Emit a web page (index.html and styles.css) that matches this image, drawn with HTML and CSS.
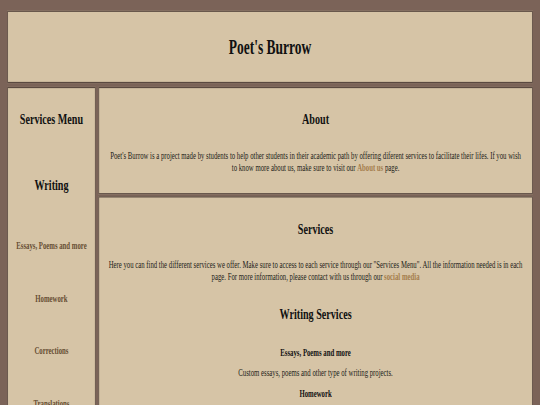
FILE: index.html
```html
<!DOCTYPE html>
<html lang="en">
<head>
<meta charset="utf-8">
<title>Poet's Burrow</title>
<link rel="stylesheet" href="styles.css">
</head>
<body>
<div class="page">
  <header class="box header">
    <h1 class="site-title">Poet's Burrow</h1>
  </header>

  <nav class="box sidebar">
    <h2 class="menu-title">Services Menu</h2>
    <h2 class="menu-group">Writing</h2>
    <ul class="menu-list">
      <li><a class="menu-link" href="#essays">Essays, Poems and more</a></li>
      <li><a class="menu-link" href="#homework">Homework</a></li>
      <li><a class="menu-link" href="#corrections">Corrections</a></li>
      <li><a class="menu-link" href="#translations">Translations</a></li>
    </ul>
  </nav>

  <main class="content">
    <section class="box section">
      <h2 class="section-title">About</h2>
      <p class="section-text">Poet's Burrow is a project made by students to help other students in their academic path by offering diferent services to facilitate their lifes. If you wish to know more about us, make sure to visit our <a class="inline-link" href="#about">About us</a> page.</p>
    </section>

    <section class="box section">
      <h2 class="section-title">Services</h2>
      <p class="section-text">Here you can find the different services we offer. Make sure to access to each service through our "Services Menu". All the information needed is in each page. For more information, please contact with us through our <a class="inline-link" href="#social">social media</a></p>

      <h2 class="section-title sub-title">Writing Services</h2>
      <div class="service-list">
        <h4 class="service-name" id="essays">Essays, Poems and more</h4>
        <p class="service-desc">Custom essays, poems and other type of writing projects.</p>
        <h4 class="service-name" id="homework">Homework</h4>
        <p class="service-desc">Help with your homework of any subject.</p>
        <h4 class="service-name" id="corrections">Corrections</h4>
        <p class="service-desc">Corrections of your texts.</p>
      </div>
    </section>
  </main>
</div>
</body>
</html>
```

FILE: styles.css
```css
html, body {
  margin: 0;
  padding: 0;
  overflow: hidden;
  background: #7b6358;
}

body {
  font-family: "Liberation Serif", "Times New Roman", serif;
  color: #1c1814;
}

/* The page is laid out at 1280px and compressed to the 540x405 window */
.page {
  width: 1280px;
  box-sizing: border-box;
  padding: 17px;
  display: grid;
  grid-template-columns: 210px 1fr;
  gap: 6px;
  transform: scale(0.421875, 0.625);
  transform-origin: 0 0;
}

.box {
  background: #d6c4a6;
  border: 2px solid #5a4940;
  box-sizing: border-box;
}

.header {
  grid-column: 1 / -1;
  padding: 17px 16px 16px;
  text-align: center;
}

.site-title {
  font-size: 32px;
  font-weight: bold;
  margin: 21px 0;
  color: #111;
}

.sidebar {
  padding: 16px;
  display: flex;
  flex-direction: column;
  align-items: center;
  text-align: center;
}

.menu-title,
.menu-group {
  font-size: 24px;
  font-weight: bold;
  margin: 0;
  color: #111;
}

.menu-title { margin-top: 20px; }
.menu-group { margin-top: 79px; }

.menu-list {
  list-style: none;
  margin: 75px 0 0;
  padding: 0;
  display: flex;
  flex-direction: column;
  gap: 66px;
}

.menu-link {
  font-weight: bold;
  font-size: 16px;
  color: #664e33;
  text-decoration: none;
}

.content {
  display: flex;
  flex-direction: column;
  gap: 3px;
}

.section {
  padding: 17px 21px 16px;
  display: flex;
  flex-direction: column;
  text-align: center;
}

.section-title {
  font-size: 24px;
  font-weight: bold;
  margin: 20px 0 0;
  color: #111;
}

.section-text {
  font-size: 16px;
  line-height: 19px;
  margin: 34px 0 16px;
  color: #221d18;
}

.sub-title { margin-top: 21px; }

.inline-link {
  color: #a47d4c;
  font-weight: bold;
  text-decoration: none;
}

.service-list {
  margin-top: 39px;
  display: flex;
  flex-direction: column;
  gap: 15px;
}

.service-name {
  font-size: 16px;
  font-weight: bold;
  margin: 0;
  color: #111;
}

.service-desc {
  font-size: 16px;
  margin: 0;
  color: #221d18;
}
```
